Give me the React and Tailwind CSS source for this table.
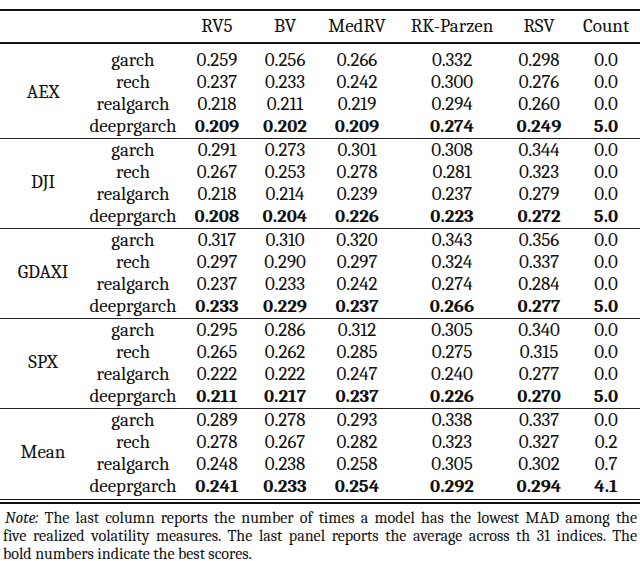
import React from 'react';

const headers = ["RV5", "BV", "MedRV", "RK-Parzen", "RSV", "Count"];

const panels = [
  {
    name: "AEX",
    rows: [
      ["garch", "0.259", "0.256", "0.266", "0.332", "0.298", "0.0"],
      ["rech", "0.237", "0.233", "0.242", "0.300", "0.276", "0.0"],
      ["realgarch", "0.218", "0.211", "0.219", "0.294", "0.260", "0.0"],
      ["deeprgarch", "0.209", "0.202", "0.209", "0.274", "0.249", "5.0"],
    ],
  },
  {
    name: "DJI",
    rows: [
      ["garch", "0.291", "0.273", "0.301", "0.308", "0.344", "0.0"],
      ["rech", "0.267", "0.253", "0.278", "0.281", "0.323", "0.0"],
      ["realgarch", "0.218", "0.214", "0.239", "0.237", "0.279", "0.0"],
      ["deeprgarch", "0.208", "0.204", "0.226", "0.223", "0.272", "5.0"],
    ],
  },
  {
    name: "GDAXI",
    rows: [
      ["garch", "0.317", "0.310", "0.320", "0.343", "0.356", "0.0"],
      ["rech", "0.297", "0.290", "0.297", "0.324", "0.337", "0.0"],
      ["realgarch", "0.237", "0.233", "0.242", "0.274", "0.284", "0.0"],
      ["deeprgarch", "0.233", "0.229", "0.237", "0.266", "0.277", "5.0"],
    ],
  },
  {
    name: "SPX",
    rows: [
      ["garch", "0.295", "0.286", "0.312", "0.305", "0.340", "0.0"],
      ["rech", "0.265", "0.262", "0.285", "0.275", "0.315", "0.0"],
      ["realgarch", "0.222", "0.222", "0.247", "0.240", "0.277", "0.0"],
      ["deeprgarch", "0.211", "0.217", "0.237", "0.226", "0.270", "5.0"],
    ],
  },
  {
    name: "Mean",
    rows: [
      ["garch", "0.289", "0.278", "0.293", "0.338", "0.337", "0.0"],
      ["rech", "0.278", "0.267", "0.282", "0.323", "0.327", "0.2"],
      ["realgarch", "0.248", "0.238", "0.258", "0.305", "0.302", "0.7"],
      ["deeprgarch", "0.241", "0.233", "0.254", "0.292", "0.294", "4.1"],
    ],
  },
];

const cols = "grid grid-cols-[94px_74px_62px_82px_108px_66px_68px]";

const Panel = ({ panel, first }) => (
  <div className={first ? "flex pt-[5px] pb-[1px]" : "flex pb-[1px]"}>
    <div className="w-[86px] flex items-center justify-center">{panel.name}</div>
    <div>
      {panel.rows.map((row, i) => (
        <div key={i} className={`${cols} h-[22px] leading-[22px]`}>
          {row.map((cell, j) => (
            <div
              key={j}
              className={j > 0 && row[0] === "deeprgarch" ? "text-center font-bold" : "text-center"}
            >
              {cell}
            </div>
          ))}
        </div>
      ))}
    </div>
  </div>
);

const App = () => {
  return (
    <div className="w-[640px] h-[561px] overflow-hidden bg-white text-[#111] font-serif [font-family:Liberation_Serif] text-[19px]">
      {/* table */}
      <div className="pt-[9px]">
        <div className="h-[2px] bg-[#111]" />
        <div className="flex h-[31px] items-center">
          <div className="w-[86px]" />
          <div className={cols}>
            <div />
            {headers.map((h) => (
              <div key={h} className="text-center">{h}</div>
            ))}
          </div>
        </div>
        <div className="h-[1.5px] bg-[#111]" />
        {panels.map((p, i) => (
          <React.Fragment key={p.name}>
            {i > 0 && <div className="h-[1px] bg-[#222]" />}
            <Panel panel={p} first={i === 0} />
          </React.Fragment>
        ))}
        <div className="mt-[1px] h-[1.5px] bg-[#111]" />
        <div className="mt-[2px] h-[1.5px] bg-[#111]" />
      </div>

      {/* note */}
      <div className="mt-[5px] px-[3px] text-[16px] leading-[18px]">
        <div className="pl-[2px] [text-align-last:justify] text-justify">
          <span className="italic">Note:</span> The last column reports the number of times a model has the lowest MAD among the
        </div>
        <div className="[text-align-last:justify] text-justify">
          five realized volatility measures. The last panel reports the average across th 31 indices. The
        </div>
        <div>bold numbers indicate the best scores.</div>
      </div>
    </div>
  );
};

export default App;
